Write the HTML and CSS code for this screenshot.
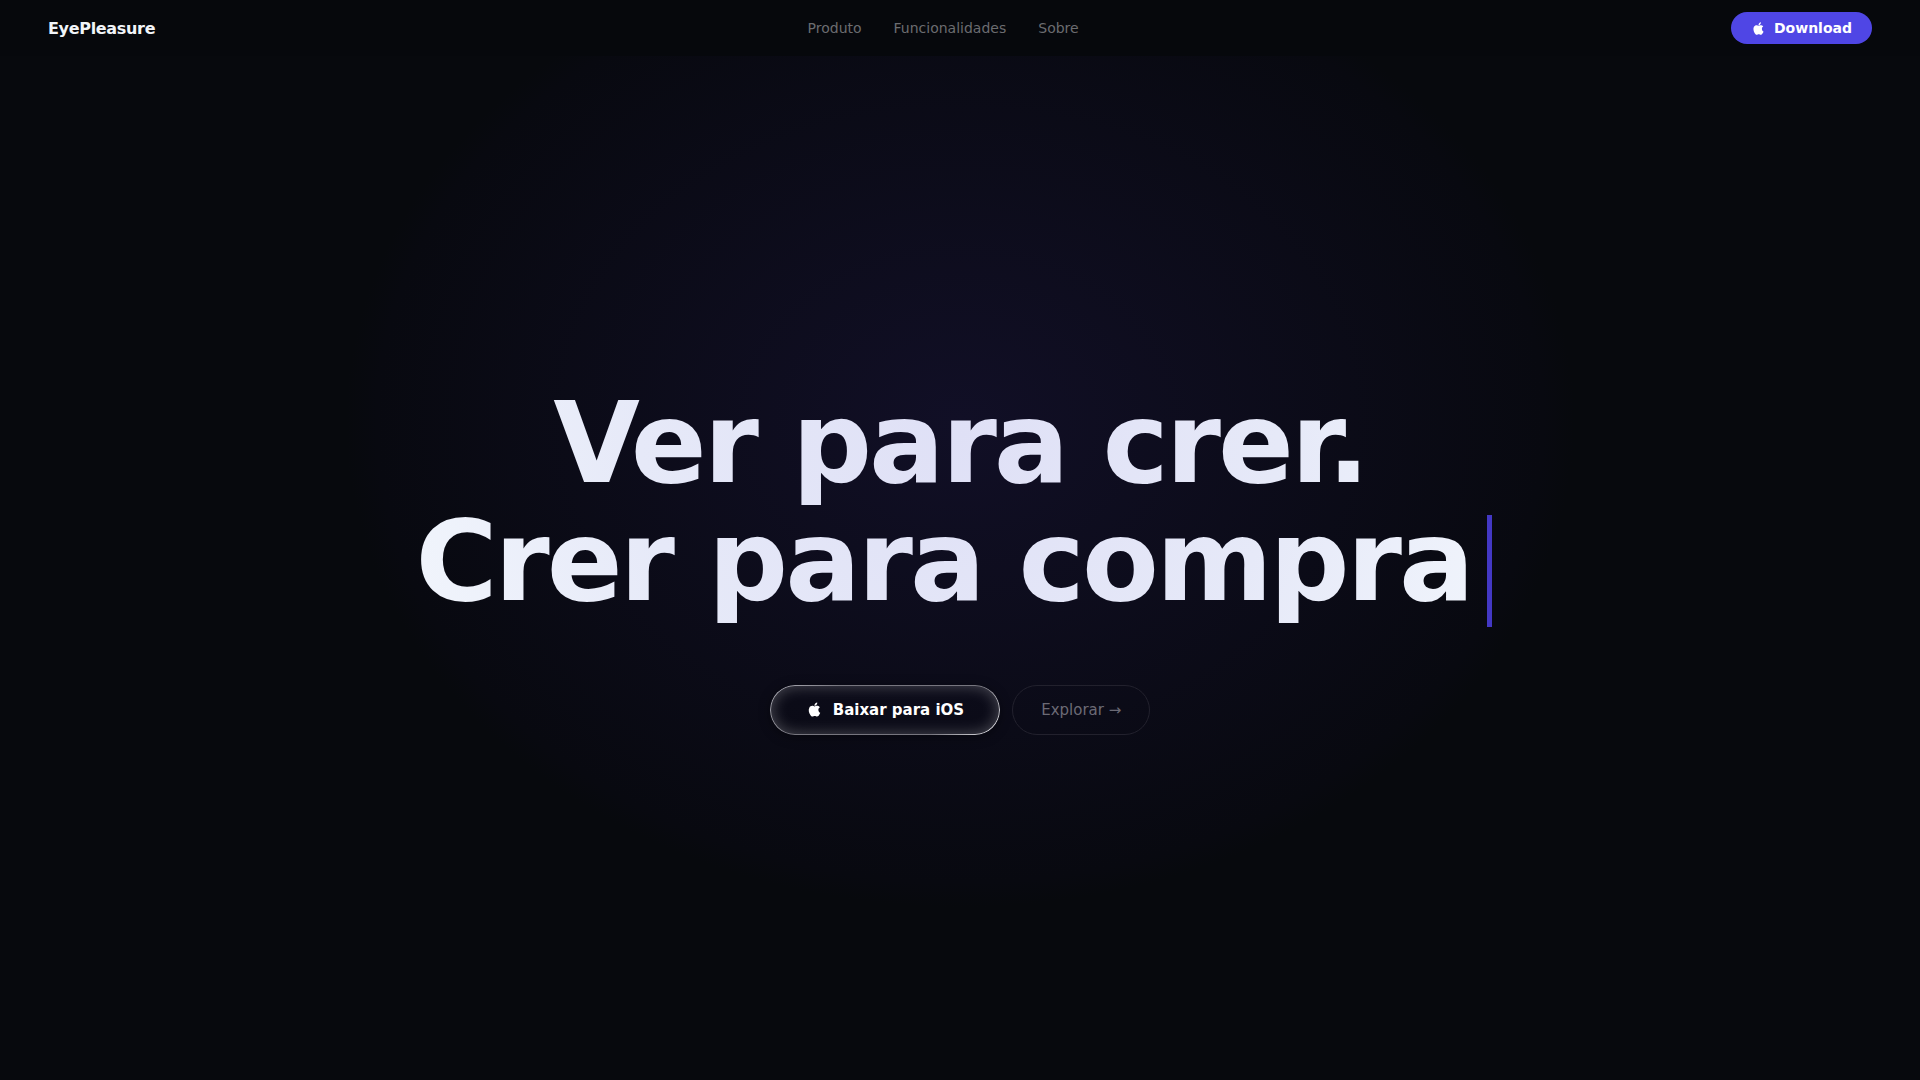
FILE: index.html
```html
<!DOCTYPE html>
<html lang="pt">
<head>
    <meta charset="UTF-8">
    <meta name="viewport" content="width=device-width, initial-scale=1.0">
    <title>EyePleasure</title>
    <link rel="stylesheet" href="styles.css">
</head>
<body>
    <header class="navbar">
        <a href="#" class="logo">EyePleasure</a>
        <nav class="nav-links">
            <a href="#produto">Produto</a>
            <a href="#funcionalidades">Funcionalidades</a>
            <a href="#sobre">Sobre</a>
        </nav>
        <a href="#download" class="nav-download">
            <svg class="apple" viewBox="0 0 24 24" aria-hidden="true"><path d="M18.71 19.5c-.83 1.24-1.71 2.45-3.05 2.47-1.34.03-1.77-.79-3.29-.79-1.53 0-2 .77-3.27.82-1.31.05-2.3-1.32-3.14-2.53C4.25 17 2.94 12.45 4.7 9.39c.87-1.52 2.43-2.48 4.12-2.51 1.28-.02 2.5.87 3.29.87.78 0 2.26-1.07 3.81-.91.65.03 2.47.26 3.64 1.98-.09.06-2.17 1.28-2.15 3.81.03 3.02 2.65 4.03 2.68 4.04-.03.07-.42 1.44-1.38 2.83M13 3.5c.73-.83 1.94-1.46 2.94-1.5.13 1.17-.34 2.35-1.04 3.19-.69.85-1.83 1.51-2.95 1.42-.15-1.15.41-2.35 1.05-3.11z"/></svg>
            Download
        </a>
    </header>

    <main class="hero">
        <h1 class="hero-title">
            <span class="line">Ver para crer.</span>
            <span class="line">Crer para compra<span class="cursor"></span></span>
        </h1>
        <div class="hero-buttons">
            <a href="#download" class="btn btn-glass">
                <svg class="apple" viewBox="0 0 24 24" aria-hidden="true"><path d="M18.71 19.5c-.83 1.24-1.71 2.45-3.05 2.47-1.34.03-1.77-.79-3.29-.79-1.53 0-2 .77-3.27.82-1.31.05-2.3-1.32-3.14-2.53C4.25 17 2.94 12.45 4.7 9.39c.87-1.52 2.43-2.48 4.12-2.51 1.28-.02 2.5.87 3.29.87.78 0 2.26-1.07 3.81-.91.65.03 2.47.26 3.64 1.98-.09.06-2.17 1.28-2.15 3.81.03 3.02 2.65 4.03 2.68 4.04-.03.07-.42 1.44-1.38 2.83M13 3.5c.73-.83 1.94-1.46 2.94-1.5.13 1.17-.34 2.35-1.04 3.19-.69.85-1.83 1.51-2.95 1.42-.15-1.15.41-2.35 1.05-3.11z"/></svg>
                Baixar para iOS
            </a>
            <a href="#produto" class="btn btn-ghost">Explorar →</a>
        </div>
    </main>
</body>
</html>
```

FILE: styles.css
```css
* {
    margin: 0;
    padding: 0;
    box-sizing: border-box;
}

body {
    min-height: 100vh;
    display: flex;
    flex-direction: column;
    font-family: "DejaVu Sans", sans-serif;
    color: #f1f5f9;
    background: radial-gradient(ellipse 32% 45% at 50% 39%, #110f26 0%, #080910 95%, #07090d 100%) #07090d;
}

a {
    color: inherit;
    text-decoration: none;
}

/* Navbar */
.navbar {
    height: 56px;
    padding: 0 48px;
    display: flex;
    align-items: center;
    justify-content: space-between;
    background: #06080c;
}

.logo {
    font-size: 16px;
    font-weight: bold;
    letter-spacing: -0.02em;
}

.nav-links {
    display: flex;
    gap: 32px;
    font-size: 14px;
    color: #6b6c70;
}

.nav-download {
    display: flex;
    align-items: center;
    gap: 8px;
    height: 32px;
    padding: 0 20px;
    border-radius: 16px;
    background: #4f46e5;
    color: #fff;
    font-size: 14px;
    font-weight: bold;
}

.apple {
    width: 15px;
    height: 15px;
    fill: currentColor;
}

/* Hero */
.hero {
    flex: 1;
    display: flex;
    flex-direction: column;
    align-items: center;
    justify-content: center;
    gap: 58px;
    padding-bottom: 18px;
}

.hero-title {
    font-size: 112px;
    line-height: 118px;
    font-weight: bold;
    letter-spacing: -3px;
    text-align: center;
    color: transparent;
    background: radial-gradient(circle at 50% 20%, #dfe0f6 0%, #e6e9f8 55%, #f1f5fc 100%);
    -webkit-background-clip: text;
    background-clip: text;
}

.line {
    display: block;
}

.cursor {
    display: inline-block;
    width: 5px;
    height: 112px;
    margin: 0 13px 0 15px;
    vertical-align: -27px;
    background: #4338c4;
}

.hero-buttons {
    display: flex;
    gap: 12px;
}

.btn {
    display: flex;
    align-items: center;
    gap: 10px;
    height: 50px;
    border-radius: 25px;
    font-size: 15px;
}

.btn .apple {
    width: 17px;
    height: 17px;
}

.btn-glass {
    position: relative;
    padding: 0 36px;
    color: #fff;
    font-weight: bold;
    box-shadow: inset 0 0 16px rgba(255, 255, 255, 0.3), 0 2px 12px rgba(0, 0, 0, 0.4);
}

/* thin light rim, brighter on two corners */
.btn-glass::before {
    content: "";
    position: absolute;
    inset: 0;
    padding: 1px;
    border-radius: inherit;
    background: linear-gradient(135deg, #b4b4bc, #77767f 25%, #77767f 75%, #f0f0f4);
    -webkit-mask: linear-gradient(#000 0 0) content-box exclude, linear-gradient(#000 0 0);
    mask: linear-gradient(#000 0 0) content-box exclude, linear-gradient(#000 0 0);
}

.btn-ghost {
    padding: 0 28px;
    border: 1px solid #22212d;
    color: #6b6a75;
}
```
